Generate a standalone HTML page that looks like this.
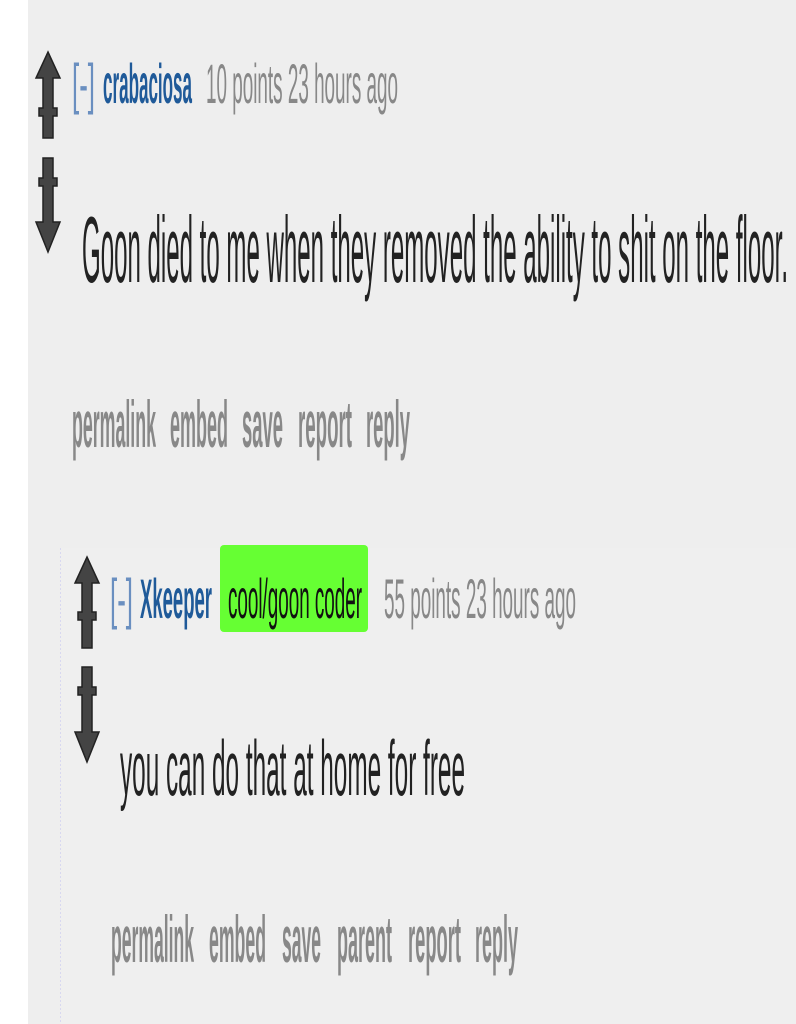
<!DOCTYPE html>
<html><head><meta charset="utf-8"><style>
html,body{margin:0;padding:0;background:#fff;}
svg{display:block;}
text{font-family:"Liberation Sans",sans-serif;}
</style></head><body>
<svg width="796" height="1024" viewBox="0 0 796 1024" xmlns="http://www.w3.org/2000/svg">
<rect x="0" y="0" width="796" height="1024" fill="#ffffff"/>
<rect x="28" y="0" width="768" height="1024" fill="#eeeeee"/>
<rect x="60" y="548" width="736" height="476" fill="#efefef"/>
<line x1="60.5" y1="548" x2="60.5" y2="1024" stroke="#d8d8f0" stroke-width="1" stroke-dasharray="2,2"/>

<g fill="#444" stroke="#222" stroke-width="1.5">
<path d="M48 52 L60 78 L53 78 L53 108 L57 108 L57 116 L53 116 L53 138 L43 138 L43 116 L39 116 L39 108 L43 108 L43 78 L36 78 Z"/>
<path d="M43 158 L53 158 L53 178 L57 178 L57 186 L53 186 L53 222 L60 222 L48 252 L36 222 L43 222 L43 186 L39 186 L39 178 L43 178 Z"/>
<path d="M87 557 L99 583 L92 583 L92 612 L96 612 L96 620 L92 620 L92 648 L82 648 L82 620 L78 620 L78 612 L82 612 L82 583 L75 583 Z"/>
<path d="M82 667 L92 667 L92 687 L96 687 L96 695 L92 695 L92 732 L99 732 L87 762 L75 732 L82 732 L82 695 L78 695 L78 687 L82 687 Z"/>
</g>

<text x="72" y="103" font-size="56" fill="#6a8fc0" textLength="23" lengthAdjust="spacingAndGlyphs">[-]</text>
<text x="103" y="103" font-size="56" font-weight="bold" fill="#1f5a99" textLength="89" lengthAdjust="spacingAndGlyphs">crabaciosa</text>
<text x="206" y="103" font-size="56" fill="#888" textLength="192" lengthAdjust="spacingAndGlyphs">10 points 23 hours ago</text>

<text x="82" y="282" font-size="94" fill="#222" textLength="706" lengthAdjust="spacingAndGlyphs">Goon died to me when they removed the ability to shit on the floor.</text>

<g font-size="66" font-weight="bold" fill="#888">
<text x="72" y="447" textLength="84" lengthAdjust="spacingAndGlyphs">permalink</text>
<text x="170" y="447" textLength="58" lengthAdjust="spacingAndGlyphs">embed</text>
<text x="242" y="447" textLength="41" lengthAdjust="spacingAndGlyphs">save</text>
<text x="298" y="447" textLength="54" lengthAdjust="spacingAndGlyphs">report</text>
<text x="366" y="447" textLength="44" lengthAdjust="spacingAndGlyphs">reply</text>
</g>

<text x="110" y="618" font-size="56" fill="#6a8fc0" textLength="23" lengthAdjust="spacingAndGlyphs">[-]</text>
<text x="140" y="618" font-size="56" font-weight="bold" fill="#1f5a99" textLength="72" lengthAdjust="spacingAndGlyphs">Xkeeper</text>
<rect x="220" y="545" width="148" height="87" rx="4" fill="#66ff33"/>
<text x="228" y="618" font-size="56" fill="#111" textLength="134" lengthAdjust="spacingAndGlyphs">cool/goon coder</text>
<text x="384" y="618" font-size="56" fill="#888" textLength="192" lengthAdjust="spacingAndGlyphs">55 points 23 hours ago</text>

<text x="120" y="795" font-size="78" fill="#222" textLength="345" lengthAdjust="spacingAndGlyphs">you can do that at home for free</text>

<g font-size="66" font-weight="bold" fill="#888">
<text x="111" y="962" textLength="83" lengthAdjust="spacingAndGlyphs">permalink</text>
<text x="209" y="962" textLength="57" lengthAdjust="spacingAndGlyphs">embed</text>
<text x="282" y="962" textLength="39" lengthAdjust="spacingAndGlyphs">save</text>
<text x="337" y="962" textLength="55" lengthAdjust="spacingAndGlyphs">parent</text>
<text x="408" y="962" textLength="53" lengthAdjust="spacingAndGlyphs">report</text>
<text x="475" y="962" textLength="43" lengthAdjust="spacingAndGlyphs">reply</text>
</g>
</svg>
</body></html>
